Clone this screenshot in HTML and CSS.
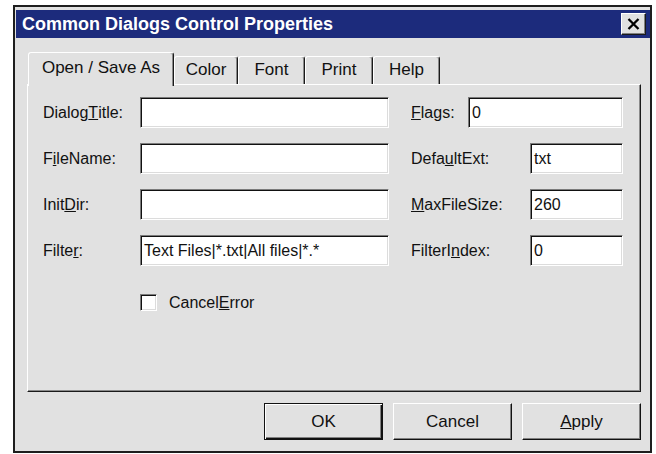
FILE: index.html
```html
<!DOCTYPE html>
<html lang="en">
<head>
<meta charset="utf-8">
<title>Common Dialogs Control Properties</title>
<link rel="stylesheet" href="styles.css">
</head>
<body>
<div class="dialog">
  <div class="titlebar">
    <span class="title">Common Dialogs Control Properties</span>
    <div class="close" role="button" aria-label="Close">
      <svg width="13" height="12" viewBox="0 0 13 12"><path d="M1.5 1 L11.5 11 M11.5 1 L1.5 11" stroke="#000" stroke-width="2.3" fill="none"/></svg>
    </div>
  </div>
  <div class="content">
    <div class="tabs">
      <div class="tab active t-open">Open / Save As</div>
      <div class="tab t-color">Color</div>
      <div class="tab t-font">Font</div>
      <div class="tab t-print">Print</div>
      <div class="tab t-help">Help</div>
    </div>
    <div class="panel">
      <div class="form">
        <div class="lbl">Dialog<u>T</u>itle:</div>
        <div class="field f-left"></div>
        <div class="lbl l-flags"><u>F</u>lags:</div>
        <div class="field f-flags">0</div>

        <div class="lbl">F<u>i</u>leName:</div>
        <div class="field f-left"></div>
        <div class="lbl l-right">Defa<u>u</u>ltExt:</div>
        <div class="field f-right">txt</div>

        <div class="lbl">Init<u>D</u>ir:</div>
        <div class="field f-left"></div>
        <div class="lbl l-right"><u>M</u>axFileSize:</div>
        <div class="field f-right">260</div>

        <div class="lbl">Filte<u>r</u>:</div>
        <div class="field f-left">Text Files|*.txt|All files|*.*</div>
        <div class="lbl l-right">FilterI<u>n</u>dex:</div>
        <div class="field f-right">0</div>

        <div class="check-row">
          <span class="box"></span>
          <span class="check-label">Cancel<u>E</u>rror</span>
        </div>
      </div>
    </div>
    <div class="buttons">
      <div class="btn default" role="button">OK</div>
      <div class="btn" role="button">Cancel</div>
      <div class="btn" role="button"><u>A</u>pply</div>
    </div>
  </div>
</div>
</body>
</html>
```

FILE: styles.css
```css
* { box-sizing: border-box; }

html, body {
  margin: 0;
  padding: 0;
  background: #fff;
}

body {
  font-family: "Liberation Sans", Arial, sans-serif;
  color: #111;
}

/* window frame */
.dialog {
  margin: 5px 0 0 13px;
  width: 639px;
  height: 448px;
  background: #e1e1e1;
  border: 2px solid #1e1e1e;
  padding: 3px 0 0 1px;
}

.titlebar {
  height: 28px;
  background: #1c2b7c;
  display: flex;
  align-items: center;
  justify-content: space-between;
  padding: 0 4px 0 6px;
}

.title {
  color: #fff;
  font-weight: bold;
  font-size: 18px;
}

.close {
  width: 25px;
  height: 22px;
  background: #e1e1e1;
  border: 1px solid;
  border-color: #fff #1a1a1a #1a1a1a #fff;
  box-shadow: inset -1px -1px #808080;
  display: flex;
  align-items: center;
  justify-content: center;
}

.content {
  padding: 14px 9px 0 11px;
}

/* tab strip */
.tabs {
  display: flex;
  align-items: flex-end;
  height: 32px;
  padding-left: 1px;
}

.tab {
  height: 28px;
  font-size: 17px;
  text-align: center;
  padding-top: 3px;
  border: 1px solid;
  border-bottom: none;
  border-color: #fff #1a1a1a transparent #fff;
  border-radius: 3px 3px 0 0;
  box-shadow: inset -1px 0 #8a8a8a;
}

.tab.active {
  position: relative;
  z-index: 2;
  height: 34px;
  margin-bottom: -2px;
  padding-top: 5px;
  background: #e1e1e1;
}

.t-open { width: 146px; }
.t-color { width: 64px; }
.t-font { width: 67px; }
.t-print { width: 68px; }
.t-help { width: 67px; }

/* page of the tab control */
.panel {
  position: relative;
  height: 308px;
  border: 1px solid;
  border-color: #fff #1a1a1a #1a1a1a #fff;
  box-shadow: inset -1px -1px #8a8a8a;
  padding: 12px 0 0 15px;
}

.form {
  display: grid;
  grid-template-columns: 97px 249px 22px 57px 62px 93px;
  grid-auto-rows: 31px;
  row-gap: 15px;
}

.lbl {
  grid-column: 1;
  font-size: 16px;
  display: flex;
  align-items: center;
}

.l-flags { grid-column: 4; }
.l-right { grid-column: 4 / 6; }

.field {
  background: #fff;
  border: 1px solid;
  border-color: #7b7b7b #fff #fff #7b7b7b;
  box-shadow: inset 1px 1px #111, inset -1px -1px #dcdcdc;
  padding: 0 3px;
  font-size: 16px;
  display: flex;
  align-items: center;
  white-space: nowrap;
}

.f-left { grid-column: 2; }
.f-flags { grid-column: 5 / 7; }
.f-right { grid-column: 6; }

.check-row {
  grid-column: 2 / 4;
  display: flex;
  align-items: center;
  gap: 12px;
  margin-top: 13px;
  height: 17px;
}

.box {
  width: 17px;
  height: 17px;
  background: #fff;
  border: 1px solid;
  border-color: #7b7b7b #fff #fff #7b7b7b;
  box-shadow: inset 1px 1px #111, inset -1px -1px #dcdcdc;
}

.check-label {
  font-size: 16px;
}

/* command buttons */
.buttons {
  display: flex;
  justify-content: flex-end;
  gap: 10px;
  margin-top: 11px;
}

.btn {
  width: 119px;
  height: 37px;
  font-size: 17px;
  display: flex;
  align-items: center;
  justify-content: center;
  background: #e1e1e1;
  border: 1px solid;
  border-color: #fff #111 #111 #fff;
  box-shadow: inset -1px -1px #808080;
}

.btn.default {
  border: 1px solid #111;
  box-shadow: inset 1px 1px #fff, inset -1px -1px #111, inset -2px -2px #808080;
}
```
